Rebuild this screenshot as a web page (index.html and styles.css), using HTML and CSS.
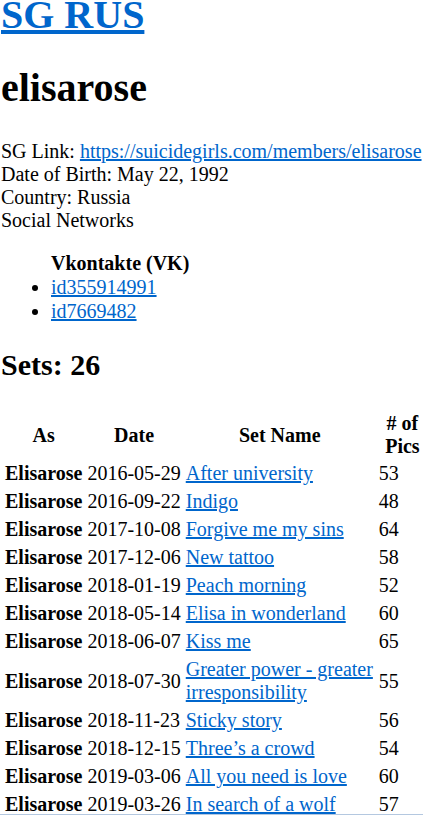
FILE: index.html
```html
<!DOCTYPE html>
<html>
<head>
  <title>SG RUS - elisarose</title>
  <link rel="stylesheet" href="styles.css">
</head>
<body>
  <h1 class="site"><a href="#">SG RUS</a></h1>
  <h1 class="model">elisarose</h1>

  <div class="info">
    SG Link: <a href="#">https://suicidegirls.com/members/elisarose</a><br>
    Date of Birth: May 22, 1992<br>
    Country: Russia<br>
    Social Networks
  </div>

  <ul class="networks">
    <li class="network-name">Vkontakte (VK)</li>
    <li><a href="#">id355914991</a></li>
    <li><a href="#">id7669482</a></li>
  </ul>

  <h2>Sets: 26</h2>

  <table class="sets">
    <tr class="head">
      <th>As</th>
      <th>Date</th>
      <th>Set Name</th>
      <th class="pics">&#35; of Pics</th>
    </tr>
    <tr><th>Elisarose</th><td class="date">2016-05-29</td><td><a href="#">After university</a></td><td>53</td></tr>
    <tr><th>Elisarose</th><td class="date">2016-09-22</td><td><a href="#">Indigo</a></td><td>48</td></tr>
    <tr><th>Elisarose</th><td class="date">2017-10-08</td><td><a href="#">Forgive me my sins</a></td><td>64</td></tr>
    <tr><th>Elisarose</th><td class="date">2017-12-06</td><td><a href="#">New tattoo</a></td><td>58</td></tr>
    <tr><th>Elisarose</th><td class="date">2018-01-19</td><td><a href="#">Peach morning</a></td><td>52</td></tr>
    <tr><th>Elisarose</th><td class="date">2018-05-14</td><td><a href="#">Elisa in wonderland</a></td><td>60</td></tr>
    <tr><th>Elisarose</th><td class="date">2018-06-07</td><td><a href="#">Kiss me</a></td><td>65</td></tr>
    <tr><th>Elisarose</th><td class="date">2018-07-30</td><td><a href="#">Greater power - greater irresponsibility</a></td><td>55</td></tr>
    <tr><th>Elisarose</th><td class="date">2018-11-23</td><td><a href="#">Sticky story</a></td><td>56</td></tr>
    <tr><th>Elisarose</th><td class="date">2018-12-15</td><td><a href="#">Three’s a crowd</a></td><td>54</td></tr>
    <tr><th>Elisarose</th><td class="date">2019-03-06</td><td><a href="#">All you need is love</a></td><td>60</td></tr>
    <tr><th>Elisarose</th><td class="date">2019-03-26</td><td><a href="#">In search of a wolf</a></td><td>57</td></tr>
  </table>

  <div class="frame-edge"></div>
</body>
</html>
```

FILE: styles.css
```css
html {
  overflow-x: hidden;
}

body {
  font-family: "Liberation Serif", "Times New Roman", serif;
  font-size: 20px;
  line-height: 23px;
  color: #000;
  margin: 0 1px;
}

a {
  color: #0066cc;
}

h1 {
  font-size: 40px;
  line-height: 46px;
  margin: 27px 0;
}

h1.site {
  margin-top: -8px;
}

h1.model {
  margin-bottom: 29px;
}

.networks {
  margin: 19px 0 18px;
  padding-left: 50px;
}

.networks li {
  line-height: 24px;
}

.network-name {
  list-style: none;
  font-weight: bold;
}

h2 {
  font-size: 30px;
  line-height: 35px;
  margin: 24px 0 26px;
}

.sets {
  width: 429px;
  border-spacing: 3px;
}

.sets th,
.sets td {
  padding: 1px;
}

.sets .head th {
  padding-bottom: 0;
}

.sets td {
  text-align: left;
}

.sets .date {
  white-space: nowrap;
}

.frame-edge {
  position: fixed;
  left: 0;
  right: 0;
  bottom: 1px;
  height: 1px;
  background-color: #b4c8e0;
}
```
